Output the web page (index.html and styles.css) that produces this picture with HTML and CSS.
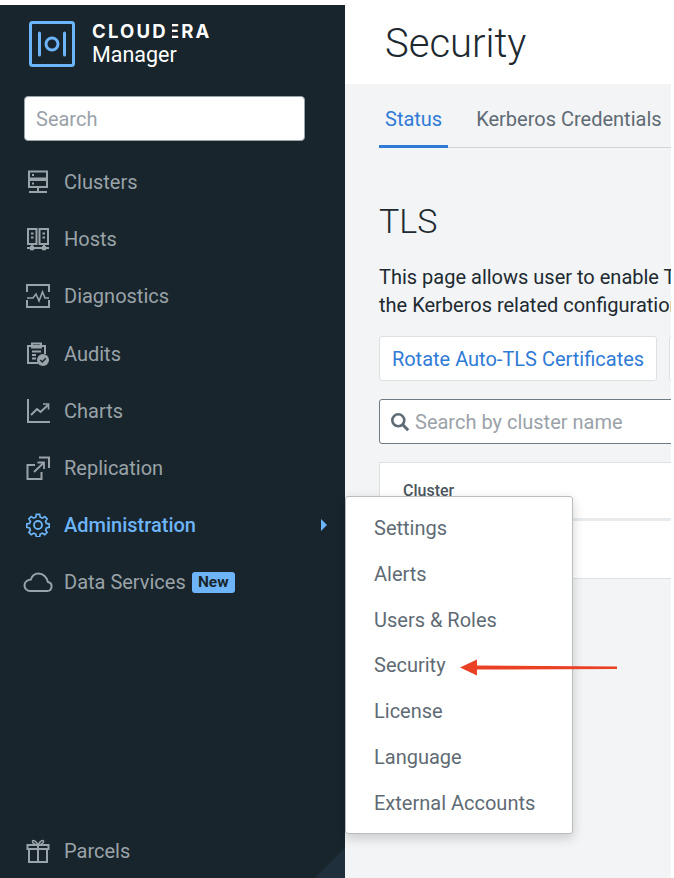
FILE: index.html
```html
<!DOCTYPE html>
<html lang="en">
<head>
  <meta charset="UTF-8" />
  <title>Security - Cloudera Manager</title>
  <link rel="stylesheet" href="styles.css">
</head>
<body>
  <div class="app">
    <aside class="sidebar">
      <div class="brand">
        <svg class="logo" width="46" height="46" viewBox="0 0 46 46" fill="none" stroke="#6db5f8">
          <rect x="1.5" y="1.5" width="43" height="43" rx="2" stroke-width="3"/>
          <path d="M10.5 12v22M35.5 12v22" stroke-width="3" stroke-linecap="round"/>
          <circle cx="23" cy="23" r="6" stroke-width="3"/>
        </svg>
        <div class="brand-text">
          <div class="brand-name">CLOUD<span class="brand-e">E</span>RA</div>
          <div class="brand-sub">Manager</div>
        </div>
      </div>
      <input class="side-search" type="text" placeholder="Search" />
      <nav class="nav">
        <a class="nav-item">
          <svg class="icon" viewBox="0 0 24 24" fill="none" stroke="currentColor" stroke-width="2"><rect x="3" y="1.500" width="18" height="7"/><rect x="3" y="10" width="18" height="7"/><path d="M12 17v5M3 22h18M6 5h2M6 13.500h2"/></svg>
          <span>Clusters</span>
        </a>
        <a class="nav-item">
          <svg class="icon" viewBox="0 0 24 24" fill="none" stroke="currentColor" stroke-width="2"><rect x="2" y="2" width="8.500" height="15"/><rect x="13.500" y="2" width="8.500" height="15"/><path d="M5 6.500h2.500M5 10.500h2.500M16.500 6.500h2.500M16.500 10.500h2.500M6 17v4M18 17v4M1 21h22"/><circle cx="6" cy="21" r="1.500" fill="currentColor"/><circle cx="18" cy="21" r="1.500" fill="currentColor"/></svg>
          <span>Hosts</span>
        </a>
        <a class="nav-item">
          <svg class="icon" viewBox="0 0 24 24" fill="none" stroke="currentColor" stroke-width="2"><path d="M1 8V1h22v7M1 16v7h22v-7"/><path d="M1 14h6l3-4 3 7 3.500-9 2.500 6h4" stroke-width="1.600"/></svg>
          <span>Diagnostics</span>
        </a>
        <a class="nav-item">
          <svg class="icon" viewBox="0 0 24 24" fill="none" stroke="currentColor" stroke-width="2"><path d="M12 21H2V4h17v8"/><rect x="6" y="1.500" width="9" height="4"/><path d="M6 9.500h9M6 13h4M6 16.500h4" stroke-width="1.800"/><circle cx="17" cy="18" r="6" fill="currentColor" stroke="none"/><path d="M14.300 18l2 2 3.500-3.800" stroke="#18252c" stroke-width="1.500"/></svg>
          <span>Audits</span>
        </a>
        <a class="nav-item">
          <svg class="icon" viewBox="0 0 24 24" fill="none" stroke="currentColor" stroke-width="2"><path d="M2 0v23h22"/><path d="M5 16l6-6 3.500 3L22 6"/><path d="M17 5h5.500v5.500" stroke-width="1.600"/></svg>
          <span>Charts</span>
        </a>
        <a class="nav-item">
          <svg class="icon" viewBox="0 0 24 24" fill="none" stroke="currentColor" stroke-width="2"><path d="M9 9H1.500v14h14v-7"/><path d="M13 1.500h10V12"/><path d="M8 16l10-9.500M11.500 6.500h6.500V13" stroke-width="1.800"/></svg>
          <span>Replication</span>
        </a>
        <a class="nav-item active">
          <svg class="icon" viewBox="0 0 24 24" fill="none" stroke="currentColor" stroke-width="1.800"><path d="M10.200 1.500h3.600l.6 3 2.400 1 2.600-1.700 2.500 2.500-1.700 2.600 1 2.400 3 .6v3.600l-3 .6-1 2.400 1.700 2.600-2.500 2.500-2.600-1.700-2.400 1-.6 3h-3.600l-.6-3-2.400-1-2.600 1.700-2.500-2.500 1.700-2.600-1-2.400-3-.6v-3.600l3-.6 1-2.400-1.700-2.600 2.500-2.500 2.600 1.700 2.400-1z" transform="translate(12 12) scale(.92) translate(-12 -13)"/><circle cx="12" cy="12" r="4"/></svg>
          <span>Administration</span>
          <span class="caret"></span>
        </a>
        <a class="nav-item">
          <svg class="icon cloud" viewBox="0 0 30 20" fill="none" stroke="currentColor" stroke-width="2"><path d="M7 19h17a4.500 4.500 0 0 0 1-8.900C24 5 20 1.500 15.500 1.500 11.500 1.500 9 4 7.800 7.500 4 8 1.500 10.500 1.500 13.500S4 19 7 19z"/></svg>
          <span>Data Services</span>
          <span class="badge">New</span>
        </a>
      </nav>
      <a class="nav-item parcels">
        <svg class="icon" viewBox="0 0 24 24" fill="none" stroke="currentColor" stroke-width="2"><path d="M3 10h18v13H3zM1.500 6h21v4h-21zM12 6v17"/><path d="M12 6C10 2 7 .5 6.500 2S8 5.500 12 6zM12 6c2-4 5-5.500 5.500-4S16 5.500 12 6z" stroke-width="1.500"/></svg>
        <span>Parcels</span>
      </a>
      <div class="corner"></div>
    </aside>

    <main class="main">
      <header class="page-head">
        <h1>Security</h1>
      </header>
      <div class="content">
        <div class="tabs">
          <a class="tab selected">Status</a>
          <a class="tab">Kerberos Credentials</a>
        </div>
        <h2>TLS</h2>
        <p class="intro">This page allows user to enable TLS<br>the Kerberos related configuration</p>
        <div class="actions">
          <button class="btn">Rotate Auto-TLS Certificates</button>
          <button class="btn btn-next"></button>
        </div>
        <div class="cluster-search">
          <svg width="20" height="20" viewBox="0 0 20 20" fill="none" stroke="#5f6b74"><circle cx="8.300" cy="8.300" r="6" stroke-width="2.600"/><path d="M12.800 12.800l5.400 5.400" stroke-width="3"/></svg>
          <span>Search by cluster name</span>
        </div>
        <div class="table">
          <div class="table-head">Cluster</div>
          <div class="table-row"></div>
        </div>
      </div>
    </main>
  </div>

  <ul class="menu">
    <li>Settings</li>
    <li>Alerts</li>
    <li>Users &amp; Roles</li>
    <li>Security</li>
    <li>License</li>
    <li>Language</li>
    <li>External Accounts</li>
  </ul>
  <svg class="arrow" width="160" height="24" viewBox="0 0 160 24">
    <path d="M0 11.500L17 3.500V9.500L157 10.500V13L17 13.500V19.500z" fill="#ea4125"/>
  </svg>
</body>
</html>
```

FILE: styles.css
```css
* { box-sizing: border-box; }
html, body {
  margin: 0;
  height: 100%;
  overflow: hidden;
  background: #fff;
}
body {
  font-family: Roboto, "Liberation Sans", sans-serif;
  position: relative;
}
.app {
  display: flex;
  width: 671px;
  height: 878px;
}

/* sidebar */
.sidebar {
  position: relative;
  width: 345px;
  margin-top: 5px;
  padding: 16px 0 0 24px;
  background: #18252c;
  display: flex;
  flex-direction: column;
  overflow: hidden;
}
.brand {
  display: flex;
  align-items: center;
  gap: 17px;
  padding-left: 5px;
}
.brand-text { color: #fff; }
.brand-name {
  font-family: Inter, Roboto, sans-serif;
  font-size: 18.500px;
  font-weight: 700;
  letter-spacing: 2.200px;
  line-height: 21px;
}
.brand-e { position: relative; }
.brand-e::after {
  content: "";
  position: absolute;
  left: 0;
  top: 0;
  width: 4px;
  height: 100%;
  background: #18252c;
}
.brand-sub {
  font-size: 21.500px;
  line-height: 24px;
  margin-top: 1px;
}
.side-search {
  width: 281px;
  height: 45px;
  margin-top: 29px;
  padding: 0 11px;
  border: 1px solid #9aa3a8;
  border-radius: 4px;
  background: #fff;
  font-family: inherit;
  font-size: 20px;
}
.side-search::placeholder { color: #9aa2a9; }
.nav {
  display: flex;
  flex-direction: column;
  gap: 17.200px;
  margin-top: 21px;
}
.nav-item {
  display: flex;
  align-items: center;
  height: 40px;
  color: #9aa3a8;
  font-size: 20px;
}
.icon {
  width: 24px;
  height: 24px;
  margin: 0 14px 0 2px;
  flex: none;
}
.cloud {
  width: 30px;
  height: 20px;
  margin: 0 11px 0 -1px;
}
.active { color: #6db5f8; font-weight: 500; }
.caret {
  margin-left: auto;
  margin-right: 18px;
  border-left: 6px solid #6db5f8;
  border-top: 6px solid transparent;
  border-bottom: 6px solid transparent;
}
.badge {
  margin-left: 6px;
  width: 43px;
  height: 21px;
  line-height: 21px;
  text-align: center;
  border-radius: 3px;
  background: #6db5f8;
  color: #18252c;
  font-size: 15.500px;
  font-weight: 700;
}
.parcels {
  margin-top: auto;
  margin-bottom: 7px;
}
.corner {
  position: absolute;
  right: 0;
  bottom: 0;
  width: 30px;
  height: 30px;
  background: #1f303c;
  clip-path: polygon(100% 0, 100% 100%, 0 100%);
}

/* main */
.main {
  width: 326px;
  display: flex;
  flex-direction: column;
  overflow: hidden;
}
.page-head {
  height: 84px;
  padding: 20px 0 0 40px;
  flex: none;
}
h1 {
  margin: 0;
  font-size: 40px;
  font-weight: 300;
  line-height: 48px;
  color: #20292f;
}
.content {
  flex: 1;
  padding: 0 0 0 34px;
  background: #f2f4f6;
  width: 326px;
}
.tabs {
  display: flex;
  height: 64px;
  border-bottom: 1px solid #cfd4d8;
  white-space: nowrap;
}
.tab {
  padding: 21px 6px 0;
  margin-right: 22px;
  font-size: 20px;
  line-height: 28px;
  color: #5f6b74;
  height: 64px;
}
.selected {
  color: #2f7bd6;
  border-bottom: 3px solid #2f7bd6;
}
h2 {
  margin: 52px 0 0;
  font-size: 34px;
  font-weight: 300;
  line-height: 42px;
  color: #20292f;
}
.intro {
  margin: 21px 0 0;
  font-size: 20px;
  line-height: 28px;
  color: #20292f;
  white-space: nowrap;
}
.actions {
  display: flex;
  gap: 12px;
  margin-top: 17px;
}
.btn {
  flex: none;
  width: 278px;
  height: 45px;
  padding: 0;
  border: 1px solid #dde1e4;
  border-radius: 3px;
  background: #fff;
  color: #2f7bd6;
  font-family: inherit;
  font-size: 20px;
}
.btn-next { width: 60px; }
.cluster-search {
  display: flex;
  align-items: center;
  gap: 5px;
  height: 45px;
  width: 340px;
  margin-top: 18px;
  padding-left: 10px;
  border: 1px solid #6f7a82;
  border-radius: 3px;
  background: #fff;
  color: #9aa2a9;
  font-size: 20px;
  white-space: nowrap;
}
.table {
  width: 340px;
  margin-top: 18px;
  background: #fff;
  border: 1px solid #dde1e4;
}
.table-head {
  height: 58px;
  padding: 18px 0 0 23px;
  font-size: 16px;
  font-weight: 500;
  color: #4b565e;
  border-bottom: 3px solid #e8ebed;
}
.table-row { height: 57px; }

/* flyout */
.menu {
  position: absolute;
  left: 345px;
  top: 496px;
  width: 228px;
  height: 338px;
  margin: 0;
  padding: 9px 0 0;
  list-style: none;
  background: #fff;
  border: 1px solid #b9bdc0;
  border-radius: 3px;
  box-shadow: 0 4px 12px rgba(0, 0, 0, .18);
}
.menu li {
  height: 45.800px;
  padding-left: 28px;
  line-height: 45.800px;
  font-size: 20px;
  color: #5f6b74;
}
.arrow {
  position: absolute;
  left: 460px;
  top: 656px;
}
```
